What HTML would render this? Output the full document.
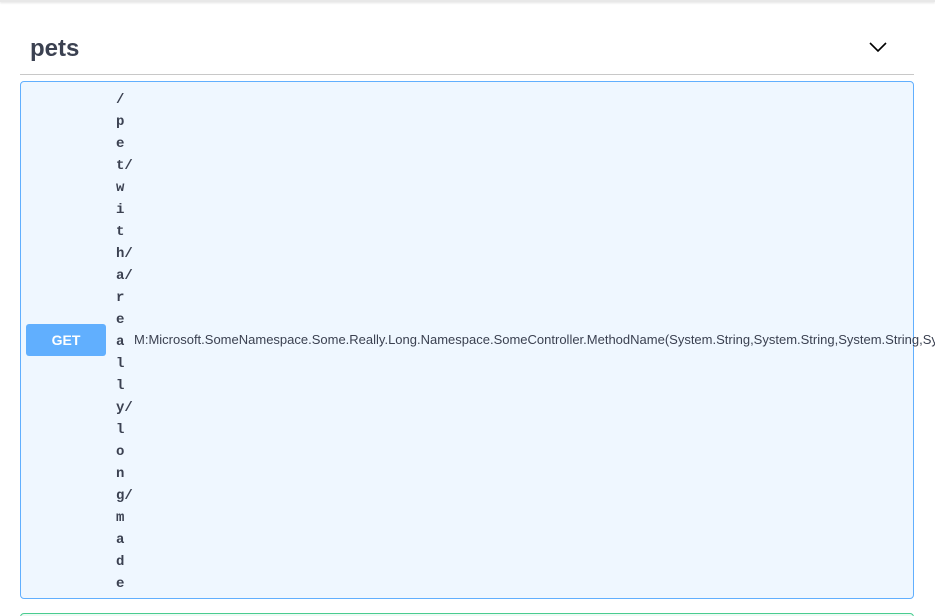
<!DOCTYPE html>
<html><head><meta charset="utf-8"><style>
html,body{margin:0;padding:0;background:#fff;width:935px;height:616px;overflow:hidden;font-family:"Liberation Sans",Arial,sans-serif;color:#3b4151}
.wrap{position:relative;width:935px;height:616px;overflow:hidden}
.topbar{position:absolute;left:0;top:0;width:935px;height:2px;background:#e8e8e8;box-shadow:0 1px 2px rgba(0,0,0,.12)}
.title{position:absolute;left:30px;top:34px;font-size:24px;font-weight:bold;color:#3b4151;line-height:30px}
.rule{position:absolute;left:20px;top:74px;width:894px;height:1px;background:#c8c8c8}
.chev{position:absolute;left:868px;top:40px}
.op{position:absolute;left:20px;top:81px;width:892px;height:516px;border:1px solid #61affe;border-radius:4px;background:#eff7ff}
.get{position:absolute;left:5px;top:242px;width:80px;height:32px;background:#61affe;border-radius:3px;color:#fff;font-weight:bold;font-size:14px;line-height:32px;text-align:center}
.path{position:absolute;left:95px;top:7px;font-family:"Liberation Mono",monospace;font-weight:bold;font-size:14px;line-height:22px;color:#3b4151}
.desc{position:absolute;left:113px;top:250px;font-size:13px;line-height:16px;white-space:nowrap;color:#3b4151}
.green{position:absolute;left:20px;top:613px;width:892px;height:20px;border:1px solid #49cc90;border-radius:4px;background:#edfaf4}
</style></head><body><div class="wrap">
<div class="topbar"></div>
<div class="title">pets</div>
<svg class="chev" width="20" height="14" viewBox="0 0 20 14"><path d="M2 3 L10 11 L18 3" fill="none" stroke="#000" stroke-width="1.6"/></svg>
<div class="rule"></div>
<div class="op">
<div class="get">GET</div>
<div class="path">/<br>p<br>e<br>t/<br>w<br>i<br>t<br>h/<br>a/<br>r<br>e<br>a<br>l<br>l<br>y/<br>l<br>o<br>n<br>g/<br>m<br>a<br>d<br>e</div>
<div class="desc">M:Microsoft.SomeNamespace.Some.Really.Long.Namespace.SomeController.MethodName(System.String,System.String,System.String,Sy</div>
</div>
<div class="green"></div>
</div></body></html>
